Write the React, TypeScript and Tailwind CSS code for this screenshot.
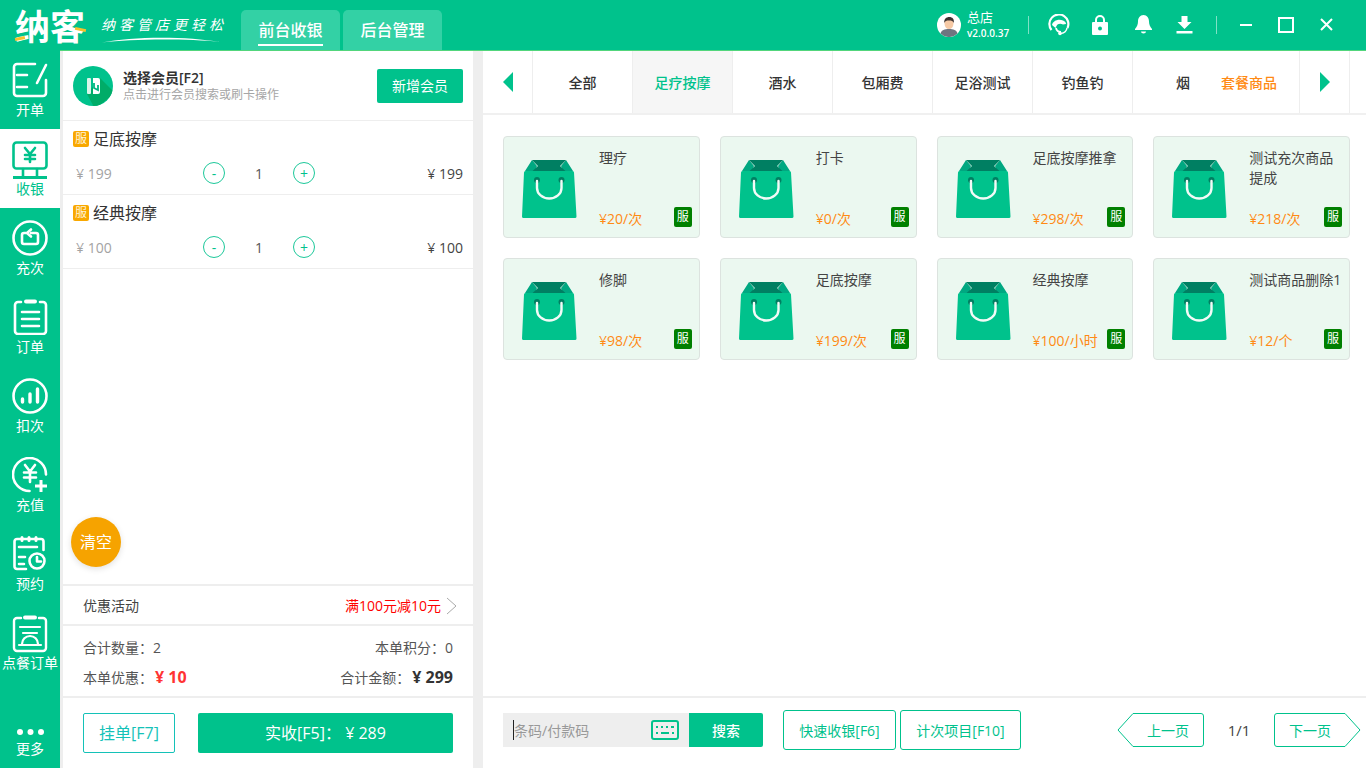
import type { ReactNode } from "react";

const line = {
  fill: "none",
  stroke: "currentColor",
  strokeWidth: 2.6,
  strokeLinecap: "round",
  strokeLinejoin: "round",
} as const;

const OpenIcon = () => (
  <svg width="36" height="36" viewBox="0 0 36 36" {...line}>
    <path d="M23 2H5a3 3 0 0 0-3 3v26a3 3 0 0 0 3 3h26a3 3 0 0 0 3-3V18" />
    <path d="M5 13h10M5 25h10M34 3l-9 18" />
  </svg>
);

const CashIcon = () => (
  <svg width="36" height="38" viewBox="0 0 36 38" {...line}>
    <rect x="1.500" y="1.500" width="33" height="26" rx="3" />
    <path d="M13 7l5 6 5-6M18 13v8M13 14h10M13 18h10" />
    <path d="M11 28v7M25 28v7" />
    <path d="M1 36.500h34" strokeWidth="3" strokeLinecap="butt" />
  </svg>
);

const RechargeIcon = () => (
  <svg width="36" height="36" viewBox="0 0 36 36" {...line}>
    <circle cx="18" cy="18" r="16.500" />
    <path d="M14 13h-2a2 2 0 0 0-2 2v7a2 2 0 0 0 2 2h12a2 2 0 0 0 2-2v-7a2 2 0 0 0-2-2h-5" />
    <path d="M19 9.500L15 13l4 3.500" />
  </svg>
);

const OrderIcon = () => (
  <svg width="36" height="36" viewBox="0 0 36 36" {...line}>
    <path d="M9 3H6a3 3 0 0 0-3 3v26a3 3 0 0 0 3 3h25a3 3 0 0 0 3-3V6a3 3 0 0 0-3-3h-3" />
    <path d="M14 2.500h9" strokeWidth="4" />
    <path d="M10 13h17M10 20h17M10 27h17" />
  </svg>
);

const DeductIcon = () => (
  <svg width="36" height="36" viewBox="0 0 36 36" {...line}>
    <circle cx="18" cy="18" r="16.500" />
    <path d="M10.500 21v3M18 16v8M25.500 11v13" strokeWidth="3.400" />
  </svg>
);

const TopUpIcon = () => (
  <svg width="36" height="36" viewBox="0 0 36 36" {...line}>
    <path d="M34 17.500A16.500 16.500 0 1 0 17.500 34" />
    <path d="M13 8l5 6.500L23 8M18 14.500V25M12 15.500h12M12 20.500h12" />
    <path d="M23 29h12M29 23v12" strokeWidth="3" strokeLinecap="butt" />
  </svg>
);

const BookIcon = () => (
  <svg width="36" height="38" viewBox="0 0 36 38" {...line}>
    <path d="M14 33H5a2.500 2.500 0 0 1-2.500-2.500V5.500A2.500 2.500 0 0 1 5 3h24a2.500 2.500 0 0 1 2.500 2.500V14" />
    <path d="M10 1.500v3M17 1.500v3M24 1.500v3" strokeWidth="3" />
    <path d="M7 11h18M7 21h6M7 28h5" />
    <circle cx="25" cy="25" r="7.500" />
    <path d="M25 21v4.500h4" />
  </svg>
);

const DishIcon = () => (
  <svg width="36" height="38" viewBox="0 0 36 38" {...line}>
    <path d="M9 3H5a3 3 0 0 0-3 3v27a3 3 0 0 0 3 3h26a3 3 0 0 0 3-3V6a3 3 0 0 0-3-3h-4" strokeWidth="2.400" />
    <path d="M13 2.500h10" strokeWidth="4" />
    <path d="M8 12h20M11 18h14" strokeWidth="2.200" />
    <path d="M10 29a8 8 0 0 1 16 0" strokeWidth="2.200" />
    <path d="M7 30h22" strokeWidth="2.200" />
  </svg>
);

const MoreIcon = () => (
  <svg width="30" height="8" viewBox="0 0 30 8" fill="currentColor">
    <circle cx="5" cy="4" r="3" />
    <circle cx="15.500" cy="4" r="3" />
    <circle cx="26" cy="4" r="3" />
  </svg>
);

const BagIcon = () => (
  <svg width="55" height="58" viewBox="0 0 55 58">
    <path d="M3 11L10 0l5 6-2 5zM51 11L44 0l-5 6 2 5z" fill="#00a881" />
    <path d="M10 0h34l-6 6 6 5.500H10L16 6z" fill="#007f62" />
    <path d="M3.500 11h47a1.500 1.500 0 0 1 1.500 1.500l2.500 44a1.500 1.500 0 0 1-1.500 1.500H1.500A1.500 1.500 0 0 1 0 56.500l2-44A1.500 1.500 0 0 1 3.500 11z" fill="#00c28c" />
    <circle cx="15" cy="20" r="3" fill="#007f62" />
    <circle cx="39.500" cy="20" r="3" fill="#007f62" />
    <path d="M15 21v7a12.250 10.500 0 0 0 24.500 0v-7" fill="none" stroke="#f2fbf7" strokeWidth="2.400" strokeLinecap="round" />
  </svg>
);

const MemberIcon = () => (
  <svg width="40" height="40" viewBox="0 0 40 40">
    <defs>
      <clipPath id="member-clip">
        <circle cx="20" cy="20" r="20" />
      </clipPath>
    </defs>
    <circle cx="20" cy="20" r="20" fill="#00c28c" />
    <path d="M14 28l13-16 15 15-20 16z" fill="#00ac68" clipPath="url(#member-clip)" />
    <rect x="14" y="12" width="4" height="16" rx="1" fill="#d9f5ea" />
    <path d="M20 12h5a2 2 0 0 1 2 2v12a2 2 0 0 1-2 2h-5z" fill="#fff" />
    <path d="M21 17v5l4 2v-5" fill="none" stroke="#00b681" strokeWidth="1.800" />
  </svg>
);

const Avatar = () => (
  <svg width="24" height="24" viewBox="0 0 24 24">
    <circle cx="12" cy="12" r="12" fill="#fff" />
    <path d="M3.500 20.500c1-3.500 4-4.500 8.500-4.500s7.500 1 8.500 4.500A12 12 0 0 1 3.500 20.500z" fill="#6e7580" />
    <ellipse cx="12" cy="10.500" rx="4.500" ry="5.500" fill="#f6c9a5" />
    <path d="M7.300 10c-.5-4 2-6 5-6s5.200 2 4.500 6c-1-2-2-2.500-4.800-2.500S8.200 8 7.300 10z" fill="#3b3230" />
  </svg>
);

const HeadsetIcon = () => (
  <svg className="ml-[19px]" width="22" height="22" viewBox="0 0 22 22">
    <path d="M3.500 16A9.500 9.500 0 1 1 19.500 14" fill="none" stroke="#fff" strokeWidth="2.200" />
    <path d="M4 11c1-4 6-6.500 11-4.500 2 .8 3 2 3 3.500l-3 .5c-2.500-1.500-5.500-1-6.500 1.500l-1 2z" fill="#fff" />
    <path d="M8 14c.5 2.500 2.500 4 5 4" fill="none" stroke="#fff" strokeWidth="1.800" />
    <path d="M19 14c-.5 3-2.500 5-6 5.500" fill="none" stroke="#fff" strokeWidth="1.500" />
    <circle cx="12" cy="19.500" r="1.800" fill="#fff" />
  </svg>
);

const headerTools = (
  <div className="flex items-center text-white">
    <HeadsetIcon />
    <svg className="ml-[22px]" width="16" height="20" viewBox="0 0 16 20">
      <path d="M4 8V5a4 4 0 0 1 8 0v3" fill="none" stroke="#fff" strokeWidth="2" />
      <path d="M1 7h14a1 1 0 0 1 1 1v11a1 1 0 0 1-1 1H1a1 1 0 0 1-1-1V8a1 1 0 0 1 1-1z" fill="#fff" />
      <circle cx="8" cy="13.500" r="2" fill="#00c28c" />
    </svg>
    <svg className="ml-[27px]" width="17" height="19" viewBox="0 0 17 19" fill="#fff">
      <path d="M8.500 0C5 0 3 3 3 6.500c0 3-1 5-3 7.500v1h17v-1c-2-2.500-3-4.500-3-7.500C14 3 12 0 8.500 0z" />
      <path d="M6 16.500h5a2.500 2 0 0 1-5 0z" />
    </svg>
    <svg className="ml-[24px]" width="17" height="18" viewBox="0 0 17 18" fill="#fff">
      <path d="M5.500 0h6v6h4l-7 7-7-7h4z" />
      <rect x="0.500" y="15" width="16" height="2.500" />
    </svg>
  </div>
);

const navItems: { label: string; icon: ReactNode; active?: boolean }[] = [
  { label: "开单", icon: <OpenIcon /> },
  { label: "收银", icon: <CashIcon />, active: true },
  { label: "充次", icon: <RechargeIcon /> },
  { label: "订单", icon: <OrderIcon /> },
  { label: "扣次", icon: <DeductIcon /> },
  { label: "充值", icon: <TopUpIcon /> },
  { label: "预约", icon: <BookIcon /> },
  { label: "点餐订单", icon: <DishIcon /> },
];

const cart = [
  { name: "足底按摩", price: "199" },
  { name: "经典按摩", price: "100" },
];

const categories = ["全部", "足疗按摩", "酒水", "包厢费", "足浴测试", "钓鱼钓"];

const goods = [
  { name: "理疗", price: "¥20/次" },
  { name: "打卡", price: "¥0/次" },
  { name: "足底按摩推拿", price: "¥298/次" },
  { name: "测试充次商品提成", price: "¥218/次" },
  { name: "修脚", price: "¥98/次" },
  { name: "足底按摩", price: "¥199/次" },
  { name: "经典按摩", price: "¥100/小时" },
  { name: "测试商品删除1", price: "¥12/个" },
];

const Sidebar = () => (
  <aside className="z-10 -mt-px flex w-[60px] shrink-0 flex-col bg-[#00c28c] text-white">
    {navItems.map((item) => (
      <div
        key={item.label}
        className={`flex h-[79px] flex-col items-center pt-[12px] ${item.active ? "bg-white text-[#00c28c]" : ""}`}
      >
        <div className="flex h-[38px] items-start justify-center">{item.icon}</div>
        <span className="whitespace-nowrap text-[14px] leading-[20px]">{item.label}</span>
      </div>
    ))}
    <div className="mt-auto flex flex-col items-center pb-[9px]">
      <MoreIcon />
      <span className="mt-[3px] text-[14px] leading-[20px]">更多</span>
    </div>
  </aside>
);

const CartRow = ({ name, price }: { name: string; price: string }) => (
  <div className="h-[74px] border-b border-[#eeeeee] px-[10px]">
    <div className="flex h-[41px] items-center pb-[5px]">
      <span className="flex h-4 w-4 items-center justify-center rounded-[2px] bg-[#f9a800] text-[12px] leading-none text-[#fff3d6]">
        服
      </span>
      <span className="ml-1 text-[16px] text-[#333]">{name}</span>
    </div>
    <div className="flex h-[22px] items-center text-[14px]">
      <span className="box-content w-[127px] pl-[3px] text-[#a3a3a3]">¥ {price}</span>
      <span className="flex h-[22px] w-[22px] items-center justify-center rounded-full border border-[#1cc89a] text-[#00c28c]">-</span>
      <span className="w-[68px] text-center text-[#555]">1</span>
      <span className="flex h-[22px] w-[22px] items-center justify-center rounded-full border border-[#1cc89a] text-[#00c28c]">+</span>
      <span className="ml-auto text-[#444]">¥ {price}</span>
    </div>
  </div>
);

const LeftPanel = () => (
  <section className="relative ml-[3px] flex w-[410px] shrink-0 flex-col bg-white">
    <div className="flex h-[70px] items-center border-b border-[#eeeeee] px-[10px]">
      <MemberIcon />
      <div className="ml-[10px]">
        <div className="text-[14px] font-semibold leading-[19px] text-[#333]">选择会员[F2]</div>
        <div className="text-[12px] leading-[16px] text-[#a6a6a6]">点击进行会员搜索或刷卡操作</div>
      </div>
      <button className="ml-auto h-[34px] w-[86px] rounded-[2px] bg-[#00c28c] text-[14px] text-white">新增会员</button>
    </div>
    {cart.map((item) => (
      <CartRow key={item.name} {...item} />
    ))}
    <button className="absolute left-[8px] top-[466px] h-[50px] w-[50px] rounded-full bg-[#f6a300] text-[16px] text-white shadow-[0_2px_6px_rgba(0,0,0,0.12)]">
      清空
    </button>
    <div className="mt-auto flex h-[42px] items-center border-y-2 border-[#eeeeee] pl-5 pr-4 pt-[1px] text-[14px] text-[#444]">
      <span>优惠活动</span>
      <span className="ml-auto text-[#ff0000]">满100元减10元</span>
      <svg className="ml-[5px]" width="11" height="18" viewBox="0 0 11 18" fill="none" stroke="#aaa">
        <path d="M1 1l9 8-9 8" />
      </svg>
    </div>
    <div className="flex h-[70px] flex-col justify-center gap-[9px] px-5 pt-[2px] text-[14px] text-[#555]">
      <div className="flex h-[21px] items-center justify-between">
        <span>合计数量：2</span>
        <span>本单积分：0</span>
      </div>
      <div className="flex h-[21px] items-center justify-between">
        <span>
          本单优惠：<b className="ml-[2px] text-[16px] text-[#ff3333]">¥ 10</b>
        </span>
        <span>
          合计金额：<b className="ml-[2px] text-[16px] text-[#333]">¥ 299</b>
        </span>
      </div>
    </div>
    <div className="flex h-[72px] items-start gap-[23px] border-t-2 border-[#eeeeee] px-5 pt-[15px]">
      <button className="h-10 w-[92px] rounded-[2px] border border-[#14c2b8] text-[16px] text-[#14c2b8]">挂单[F7]</button>
      <button className="h-10 flex-1 rounded-[2px] bg-[#00c28c] text-[16px] text-white">实收[F5]： ¥ 289</button>
    </div>
  </section>
);

const CategoryBar = () => (
  <div className="flex h-[64px] border-b-2 border-[#f0f0f0] text-[14px] font-medium text-[#333]">
    <div className="flex w-[50px] items-center justify-center border-r border-[#eeeeee]">
      <svg width="10" height="20" viewBox="0 0 10 20" fill="#00c28c">
        <path d="M10 0v20L0 10z" />
      </svg>
    </div>
    {categories.map((name, i) => (
      <div
        key={name}
        className={`flex w-[100px] items-center justify-center border-r border-[#eeeeee] ${i === 1 ? "bg-[#f6f6f6] text-[#00c28c]" : ""}`}
      >
        {name}
      </div>
    ))}
    <div className="flex w-[167px] items-center border-r border-[#eeeeee]">
      <span className="ml-[43px]">烟</span>
      <span className="ml-[31px] text-[#ff8a14]">套餐商品</span>
    </div>
    <div className="flex w-[50px] items-center justify-center border-r border-[#eeeeee]">
      <svg width="10" height="20" viewBox="0 0 10 20" fill="#00c28c">
        <path d="M0 0v20l10-10z" />
      </svg>
    </div>
  </div>
);

const GoodsCard = ({ name, price }: { name: string; price: string }) => (
  <div className="flex h-[102px] rounded-[4px] border border-[#dce3df] bg-[#ebf8f0] pl-[18px]">
    <div className="mt-[23px] shrink-0">
      <BagIcon />
    </div>
    <div className="relative ml-[22px] flex-1 pr-[4px] pt-[11px]">
      <div className="text-[14px] leading-[20px] text-[#444]">{name}</div>
      <div className="absolute bottom-[8px] left-0 whitespace-nowrap text-[14px] leading-[20px] text-[#ff8a14]">{price}</div>
      <span className="absolute bottom-[10px] right-[7px] flex h-5 w-[18px] items-center justify-center rounded-[2px] bg-[#008000] text-[12px] leading-none text-white">
        服
      </span>
    </div>
  </div>
);

const PagerButton = ({ label, next }: { label: string; next?: boolean }) => (
  <button className={`relative flex h-[34px] w-[87px] items-center justify-center text-[14px] text-[#00c28c] ${next ? "pr-[15px]" : "pl-[15px]"}`}>
    <svg className="absolute inset-0" width="87" height="34" viewBox="0 0 87 34" fill="none" stroke="#00c28c">
      <path d={next ? "M3 .5h68l15 16.500-15 16.500H3a2.500 2.500 0 0 1-2.500-2.500V3A2.500 2.500 0 0 1 3 .5z" : "M84 .5H16L1 17l15 16.500h68a2.500 2.500 0 0 0 2.500-2.500V3A2.500 2.500 0 0 0 84 .5z"} />
    </svg>
    <span className="relative">{label}</span>
  </button>
);

const BottomBar = () => (
  <div className="flex h-[72px] items-start border-t-2 border-[#eeeeee] pl-5 pr-[5px] pt-[12px]">
    <div className="mt-[3px] flex h-[34px] w-[186px] items-center bg-[#eeeeee] pl-[10px]">
      <span className="h-[20px] w-px bg-[#222]" />
      <span className="text-[14px] text-[#999]">条码/付款码</span>
      <svg className="ml-auto mr-[10px]" width="28" height="20" viewBox="0 0 28 20" fill="none" stroke="#00c28c" strokeWidth="2">
        <rect x="1" y="1" width="26" height="18" rx="2" />
        <path d="M5 7h2M10 7h2M15 7h2M20 7h3M5 13h2M10 13h8M21 13h2" />
      </svg>
    </div>
    <button className="mt-[3px] h-[34px] w-[74px] rounded-r-[2px] bg-[#00c28c] text-[14px] font-medium text-white">搜索</button>
    <button className="ml-5 h-10 w-[113px] rounded-[3px] border border-[#00c28c] text-[14px] text-[#00c28c]">快速收银[F6]</button>
    <button className="ml-[4px] h-10 w-[121px] rounded-[3px] border border-[#00c28c] text-[14px] text-[#00c28c]">计次项目[F10]</button>
    <div className="ml-auto mt-[3px] flex items-center">
      <PagerButton label="上一页" />
      <span className="w-[70px] text-center text-[15px] text-[#444]">1/1</span>
      <PagerButton label="下一页" next />
    </div>
  </div>
);

export default function App() {
  return (
    <div className="flex h-[768px] w-[1366px] flex-col overflow-hidden bg-[#eeeeee] font-['Open_Sans','Noto_Sans_CJK_SC',sans-serif]">
      <header className="flex h-[51px] shrink-0 items-end border-b border-[#52d67c] bg-[#00c28c] text-white">
        <div className="relative mb-[2px] ml-[15px] w-[72px] whitespace-nowrap text-[35px] font-bold leading-[42px]">
          纳客
          <span className="absolute bottom-[8px] left-0 h-[3px] w-[10px] -rotate-12 bg-[#f6c22d]" />
          <span className="absolute right-[1px] top-[22px] h-[3px] w-[11px] rotate-12 bg-[#f6c22d]" />
        </div>
        <div className="mb-[7px] ml-[14px] w-[126px]">
          <div className="whitespace-nowrap text-[14px] italic leading-[20px] tracking-[4px]">纳客管店更轻松</div>
          <svg className="mt-[2px]" width="120" height="6" viewBox="0 0 120 6" fill="#fff">
            <path d="M1 5.500C30-.5 85-1 119 5 85 1.500 30 2 1 5.500z" />
          </svg>
        </div>
        <nav className="ml-[14px] flex gap-[3px]">
          <div className="flex h-[40px] w-[99px] items-center justify-center rounded-t-[5px] bg-[#33d1a5] pt-[1px] text-[16px] font-medium">
            <span className="border-b-2 border-white leading-[28px]">前台收银</span>
          </div>
          <div className="flex h-[40px] w-[99px] items-center justify-center rounded-t-[5px] bg-[#33d1a5] text-[16px] font-medium">后台管理</div>
        </nav>
        <div className="ml-auto flex h-full items-center pb-[1px] pr-[33px]">
          <Avatar />
          <div className="ml-[6px] w-[61px]">
            <div className="text-[13px] leading-[17px]">总店</div>
            <div className="text-[10px] font-semibold leading-[14px]">v2.0.0.37</div>
          </div>
          <span className="h-[18px] w-px bg-white/50" />
          {headerTools}
          <span className="ml-[23px] h-[18px] w-px bg-white/50" />
          <svg className="ml-[23px]" width="12" height="4" viewBox="0 0 12 4" fill="#fff">
            <rect y="1" width="12" height="2" />
          </svg>
          <svg className="ml-[26px]" width="16" height="16" viewBox="0 0 16 16" fill="none" stroke="#fff" strokeWidth="2">
            <rect x="1" y="1" width="14" height="14" />
          </svg>
          <svg className="ml-[26px]" width="13" height="13" viewBox="0 0 13 13" fill="none" stroke="#fff" strokeWidth="2">
            <path d="M1 1l11 11M12 1L1 12" />
          </svg>
        </div>
      </header>
      <div className="flex min-h-0 flex-1">
        <Sidebar />
        <LeftPanel />
        <main className="ml-[10px] flex flex-1 flex-col bg-white">
          <CategoryBar />
          <div className="grid flex-1 grid-cols-4 content-start gap-x-5 gap-y-5 pl-5 pr-4 pt-[21px]">
            {goods.map((item) => (
              <GoodsCard key={item.name} {...item} />
            ))}
          </div>
          <BottomBar />
        </main>
      </div>
    </div>
  );
}
